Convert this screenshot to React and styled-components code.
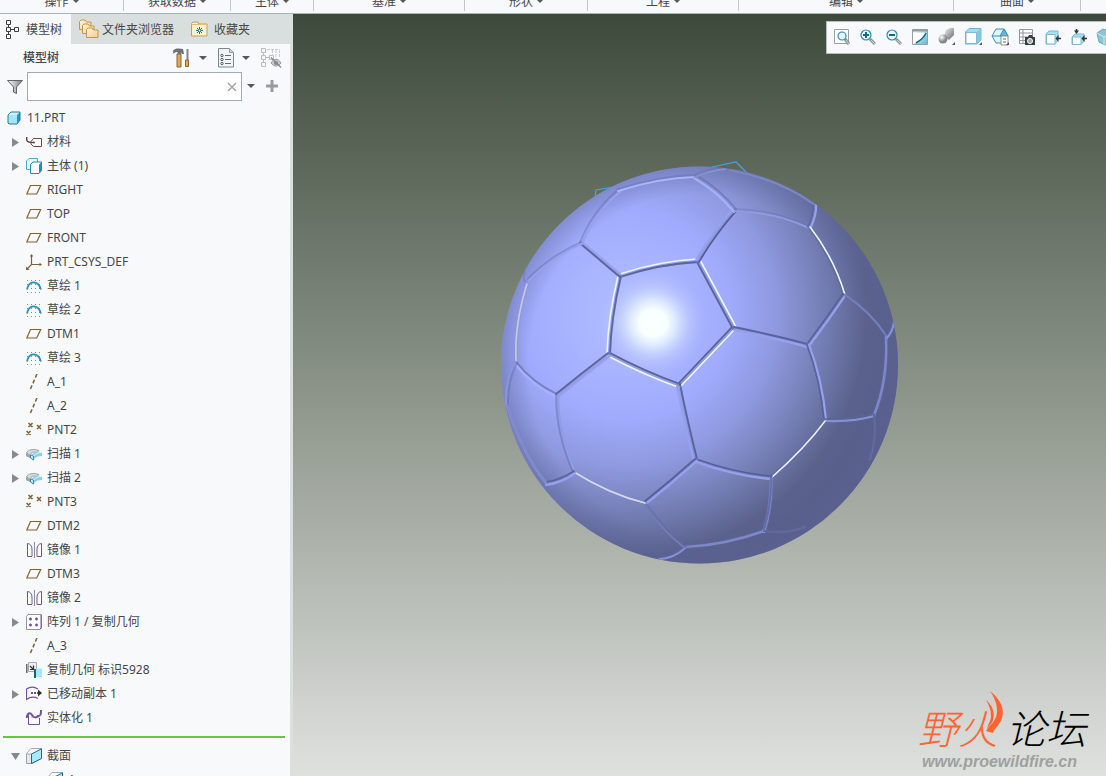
import React from "react";
import styled, { createGlobalStyle } from "styled-components";

const GlobalStyle = createGlobalStyle`
  * { box-sizing: border-box; }
  html, body { margin: 0; padding: 0; }
  body, button, input {
    font-family: "Noto Sans", "Noto Sans CJK SC", sans-serif;
    font-size: 12px;
    color: #44484b;
  }
  button { margin: 0; padding: 0; border: 0; background: none; cursor: pointer; }
  svg { display: block; flex: none; }
`;

const Page = styled.div`
  display: flex;
  flex-direction: column;
  height: 100vh;
  overflow: hidden;
  background: #f8f9fb;
`;

const Ribbon = styled.div`
  display: flex;
  flex: none;
  height: 14px;
  overflow: hidden;
  background: #f8f9fc;
  border-bottom: 1px solid #a9b4b4;
`;

const RibbonGroup = styled.button`
  display: flex;
  flex: none;
  align-items: flex-end;
  justify-content: center;
  gap: 4px;
  width: ${(p) => p.$width}px;
  height: 11px;
  border-right: 1px solid #c0c6c9;
  line-height: 18px;
  white-space: nowrap;
  overflow: hidden;
`;

const Caret = styled.span`
  width: 0;
  height: 0;
  border: ${(p) => p.$size}px solid transparent;
  border-top-color: #55595c;
  border-bottom-width: 0;
  margin-bottom: ${(p) => p.$lift || 0}px;
`;

const Main = styled.div`
  display: flex;
  flex: 1;
  min-height: 0;
`;

const Sidebar = styled.aside`
  display: flex;
  flex-direction: column;
  flex: none;
  width: 293px;
  border-right: 3px solid #dae0e0;
  background: #f7f9fb;
  overflow: hidden;
`;

const Tabs = styled.div`
  display: flex;
  flex: none;
  height: 30px;
  background: #d9dfde;
`;

const Tab = styled.button`
  display: flex;
  align-items: center;
  gap: ${(p) => p.$gap}px;
  padding: 0 9px 0 ${(p) => (p.$active ? 6 : 8)}px;
  background: ${(p) => (p.$active ? "#f7f9fb" : "transparent")};
  white-space: nowrap;
`;

const PanelHeader = styled.div`
  display: flex;
  flex: none;
  align-items: center;
  height: 28px;
  padding: 0 8px 0 23px;
`;

const PanelTitle = styled.h2`
  flex: 1;
  margin: 0;
  padding-bottom: 2px;
  font-size: 12px;
  font-weight: 500;
`;

const Tools = styled.div`
  display: flex;
  align-items: center;
  gap: 11px;
`;

const ToolPair = styled.div`
  display: flex;
  align-items: center;
  gap: 8px;
`;

const IconButton = styled.button`
  display: flex;
  align-items: center;
  justify-content: center;
`;

const FilterRow = styled.div`
  display: flex;
  flex: none;
  align-items: center;
  height: 29px;
  padding-left: 7px;
  gap: 4px;
`;

const SearchBox = styled.div`
  display: flex;
  flex: none;
  align-items: center;
  width: 215px;
  height: 29px;
  padding: 0 4px;
  border: 1px solid #9fadb0;
  background: #fff;
`;

const SearchInput = styled.input`
  flex: 1;
  min-width: 0;
  border: 0;
  outline: 0;
  background: transparent;
`;

const FilterActions = styled.div`
  display: flex;
  align-items: center;
  gap: 11px;
  padding: 0 0 2px 1px;
`;

const Tree = styled.ul`
  flex: none;
  margin: 0;
  padding: ${(p) => (p.$top ? 5 : 0)}px 0 0;
  list-style: none;
`;

const TreeRow = styled.li`
  display: flex;
  align-items: center;
  height: 24px;
  padding-left: ${(p) => p.$indent}px;
  white-space: nowrap;
`;

const RowLabel = styled.span`
  padding-bottom: 2px;
`;

const Expander = styled.button`
  display: flex;
  align-items: center;
  justify-content: center;
  width: 15px;
  height: 16px;
  margin-right: 3px;
`;

const NodeIcon = styled.span`
  display: flex;
  width: ${(p) => (p.$root ? 20 : 21)}px;
`;

const InsertLine = styled.div`
  flex: none;
  height: 2px;
  margin: 6px 5px 6px 3px;
  background: #62c83c;
`;

const Viewport = styled.main`
  position: relative;
  display: flex;
  flex: 1;
  align-items: center;
  justify-content: center;
  min-width: 0;
  padding-bottom: 60px;
  overflow: hidden;
  background: linear-gradient(#3d4a3b, #8d958a 50%, #dfe1df);
`;

const ViewToolbar = styled.div`
  position: absolute;
  top: 7px;
  right: 0;
  display: flex;
  width: 280px;
  height: 33px;
  padding: 0 0 2px 2px;
  overflow: hidden;
  background: #f8f9fc;
  border: 1px solid #b6bebd;
  border-right: 0;
`;

const ViewButton = styled.button`
  display: flex;
  flex: none;
  align-items: center;
  justify-content: center;
  width: ${(p) => (p.$menu ? 27 : 26)}px;
`;

const Watermark = styled.div`
  position: absolute;
  right: 20px;
  bottom: 4px;
  width: 168px;
`;

const LogoText = styled.div`
  display: flex;
  justify-content: space-between;
  font-family: "Liberation Sans", "Noto Sans CJK SC", sans-serif;
  font-weight: 300;
  font-style: italic;
  font-size: 40px;
  line-height: 44px;
  color: #000;
`;

const LogoFire = styled.span`
  color: #ff6430;
`;

const LogoUrl = styled.a`
  display: block;
  padding-left: 4px;
  font: italic bold 16px/20px "Liberation Sans", sans-serif;
  color: #9fa19f;
  text-decoration: none;
`;

const Flame = styled.svg`
  position: absolute;
  left: 63px;
  top: -17px;
`;

/* ---------- tree icons ---------- */

const I = ({ w = 16, h = 16, children }) => (
  <svg width={w} height={h} viewBox={`0 0 ${w} ${h}`} fill="none" aria-hidden="true">{children}</svg>
);

const brown = "#80622f";
const purple = "#7650a0";

const icons = {
  part: (
    <I w={14} h={14}>
      <path d="M1 4 4 1h9v8l-3 4H1z" fill="#c9f3fd" />
      <path d="M10 4l3-3v8l-3 4z" fill="#2795bd" />
      <path d="M1 4h9v9H1z" fill="#a3e6fb" />
      <path d="M1 4 4 1h9v8l-3 4H2l-1-1z" stroke="#287b9b" />
    </I>
  ),
  material: (
    <I>
      <path d="M5 7.500 7.500 4.500h8v8h-8L5 10z" stroke="#74483c" fill="#fff" />
      <path d="M.7 3v3C1 8.500 4 8.500 8 8.500" stroke="#604038" strokeWidth="1.400" />
      <circle cx="8" cy="8.500" r="1" fill="#74483c" />
    </I>
  ),
  body: (
    <I>
      <path d="M.5 3l2.500-2.500h8.500v9L9.500 11.500h-9z" fill="#e5f7fc" stroke="#55a9c5" />
      <path d="M4.500 6.500 7 4h8.500v8.500l-2.500 3H4.500z" fill="#fff" stroke="#2b8bad" />
      <path d="M13 6.500 15.500 4v8.500l-2.500 3z" fill="#2b8bad" />
    </I>
  ),
  plane: <I><path d="M4.500 3.500h10.200l-4 8.500H.8z" stroke={brown} strokeWidth="1.200" /></I>,
  csys: (
    <I>
      <path d="M5.500 1v9.500H15M5.500 10.500 1 15" stroke={brown} strokeWidth="1.200" />
      <path d="M5.500 0 7.200 2.500H3.800zM16 10.500 13.500 8.800v3.400zM0 16v-3.500L3.500 16z" fill={brown} />
    </I>
  ),
  sketch: (
    <I>
      {[1, 5, 9, 13].map((x) => [2, 6, 10, 14].map((y) => <path key={`${x}-${y}`} d={`M${x} ${y}.5h1`} stroke="#888" />))}
      <path d="M1 11.500C3 2 12 2 15 11.500" stroke="#2693bd" strokeWidth="1.800" />
    </I>
  ),
  axis: <I><path d="M11 0 4 16" stroke={brown} strokeWidth="1.500" strokeDasharray="4 2.200" /></I>,
  points: (
    <I><path d="M2.500 1l4 4m0-4-4 4M11 3l4 4m0-4-4 4M.5 9l4 4m0-4-4 4" stroke={brown} strokeWidth="1.500" /></I>
  ),
  sweep: (
    <I>
      <path d="M.5 7C2 3.500 7 2.500 13 4.500l-2 2c-4-1-6 0-7 2.500z" fill="#d5d9dc" stroke="#8d9498" strokeWidth=".8" />
      <path d="M0 7v3l4 2V9z" fill="#9da4a8" />
      <path d="M5 9c2-2 5-3 11-3v4c-4 0-6 1-8 3l-3-1z" fill="#8ad0e9" />
      <path d="M4.500 9l3.500.5c2-2 5-3 8-3" stroke="#e1f6fc" />
      <path d="M4.500 9v3l3 2v-4z" fill="#c9edf8" stroke="#3c8baa" />
    </I>
  ),
  mirror: (
    <I>
      <path d="M1.500 1.500v13H6V7C6 4 4 1.500 1.500 1.500zM15.500 1.500v13H11V7c0-3 2-5.500 4.500-5.500z" fill="#fff" stroke={purple} />
      <path d="M8.500 0v16" stroke="#888d91" />
    </I>
  ),
  pattern: (
    <I>
      <path d="M.5 2.500 2 .5h13.500v13.500L14 15.500H.5z" fill="#fff" stroke="#8f9398" />
      <path d="M15 1v13l-1 1" stroke={purple} />
      <path d="M3 5h3M4.500 3.500v3M9 5h3M10.500 3.500v3M3 11h3M4.500 9.500v3M9 11h3M10.500 9.500v3" stroke={purple} strokeWidth="1.400" />
    </I>
  ),
  copyGeom: (
    <I>
      <path d="M2.500.5H10.500v9H2.500z" fill="#eceeef" stroke="#aaa" />
      <path d="M.8 2v9" stroke="#666" strokeWidth="1.500" />
      <path d="M4 4l3 3M7.500 3.500v4H4" stroke="#333" strokeWidth="1.200" />
      <path d="M9 6.500h7V15H9z" fill="#a5e8fb" />
      <path d="M9 7v9" stroke="#16637f" strokeWidth="2" />
    </I>
  ),
  moved: (
    <I>
      <path d="M12 12.500C7 10 4 11 .5 13.500V3C5 0 9 1 12 3" stroke={purple} strokeWidth="1.200" />
      <path d="M5 7h8" stroke="#333" strokeWidth="1.500" strokeDasharray="2 1" />
      <path d="M12 3.500 16 7l-4 3.500z" fill="#333" />
    </I>
  ),
  solidify: (
    <I>
      <path d="M2.500 5v9.500h11V5" fill="#fff" stroke={purple} />
      <path d="M5 4l5 4 4-4v4H5z" fill="#d9cee7" />
      <path d="M.8 8C1 3 4 2 6 5s4 3 6 1c3 0 3-2 3-6" stroke={purple} strokeWidth="2" />
    </I>
  ),
  section: (
    <I>
      <path d="M.5 5.500 5 .5h10.500v10L6 15.500H.5z" fill="#fff" stroke="#a5a8aa" />
      <path d="M.5 6h5v9.500h-5z" fill="#e5e7e8" stroke="#a0a3a5" />
      <path d="M5.500 6 15.500.8v9.700l-10 5z" fill="#a8e8fb" stroke="#1b6f8e" />
    </I>
  ),
};

const nodes = [
  ["材料", "material", true], ["主体 (1)", "body", true], ["RIGHT", "plane"], ["TOP", "plane"],
  ["FRONT", "plane"], ["PRT_CSYS_DEF", "csys"], ["草绘 1", "sketch"], ["草绘 2", "sketch"],
  ["DTM1", "plane"], ["草绘 3", "sketch"], ["A_1", "axis"], ["A_2", "axis"], ["PNT2", "points"],
  ["扫描 1", "sweep", true], ["扫描 2", "sweep", true], ["PNT3", "points"], ["DTM2", "plane"],
  ["镜像 1", "mirror"], ["DTM3", "plane"], ["镜像 2", "mirror"], ["阵列 1 / 复制几何", "pattern", true],
  ["A_3", "axis"], ["复制几何 标识5928", "copyGeom"], ["已移动副本 1", "moved", true], ["实体化 1", "solidify"],
];

const Arrow = ({ open }) => (
  <svg width="9" height="9" viewBox="0 0 9 9" fill="#85898c" aria-hidden="true">
    <path d={open ? "M0 1h9L4.500 8z" : "M1 0l7 4.500L1 9z"} />
  </svg>
);

function Node({ label, icon, expandable, open }) {
  return (
    <TreeRow $indent={expandable ? 8 : 26}>
      {expandable && <Expander aria-label={`${open ? "折叠" : "展开"} ${label}`}><Arrow open={open} /></Expander>}
      <NodeIcon>{icons[icon]}</NodeIcon>
      <RowLabel>{label}</RowLabel>
    </TreeRow>
  );
}

/* ---------- tab and header icons ---------- */

const TreeGlyph = ({ color = "#3c4043" }) => (
  <g stroke={color} fill="none">
    <path d="M.5.500h4v4h-4zM.5 7.500h4v4h-4zM.5 14.500h4v4h-4zM8.500 7.500h4v4h-4zM2.500 4.500v3M2.500 11.500v3M4.500 9.500h4" />
  </g>
);

const FoldersIcon = () => (
  <I w={20} h={20}>
    <defs><linearGradient id="fold" x2="1" y2="1"><stop stopColor="#fff8de" /><stop offset="1" stopColor="#f1cc82" /></linearGradient></defs>
    {[[0, 0], [3, 4], [7, 8]].map(([x, y]) => (
      <path key={x} transform={`translate(${x} ${y})`} d="M.5 2.500 2 1h4l1.500 2h4.500v7.500H.5z" fill="url(#fold)" stroke="#c2974c" />
    ))}
  </I>
);

const FavouriteIcon = () => (
  <I w={17} h={16}>
    <path d="M.5 2.500 2 1h5l1 2h8v12H.5z" fill="#fff1ca" stroke="#c49c58" />
    <path d="M.5 3.500h15.500" stroke="#e3bc75" />
    <path d="M8.500 6v7M5 9.500h7M6 7l5 5M11 7l-5 5" stroke="#136a8b" />
    <circle cx="8.500" cy="9.500" r="1" fill="#fff" />
  </I>
);

const HammerIcon = () => (
  <I w={18} h={20}>
    <path d="M4 6h4v13H4z" fill="#dba95a" stroke="#8f6530" />
    <path d="M0 2.500C2 0 6 0 10 1l1 5H9L8 4.500v1.500H4.500V4C2.500 4 1.500 4.500.5 6z" fill="#6d7275" />
    <path d="M14.500 1v11" stroke="#81878b" strokeWidth="2" />
    <path d="M12.500 12h3v6.500h-3z" fill="#dba95a" stroke="#8f6530" />
  </I>
);

const ListIcon = () => (
  <I w={16} h={20}>
    <path d="M.5.500h11l4 4v14.500H.5z" fill="#f2f5f6" stroke="#7c878c" />
    <path d="M11.500.500v4h4" fill="#c9d0d3" stroke="#929b9f" />
    <path d="M7 7.500h6M7 11.500h6M7 15.500h6" stroke="#666d71" />
    <g stroke="#555c60"><circle cx="4" cy="7.500" r="1.200" /><circle cx="4" cy="11.500" r="1.200" /><circle cx="4" cy="15.500" r="1.200" /></g>
  </I>
);

const HiddenTreeIcon = () => (
  <I w={21} h={20}>
    <TreeGlyph color="#b8bdbf" />
    <path d="M6 1.500h12.500M11.500 2v6M15 2v8M18.500 2v8" stroke="#c9cdcf" strokeDasharray="3 1" />
    <path d="M10 15c3-5 7-5 10 0-3 4-7 4-10 0z" fill="#c6cacc" stroke="#96999b" />
    <circle cx="15" cy="15" r="2" fill="#85898b" />
    <path d="M10 9.500 20 19.500" stroke="#85898b" strokeWidth="1.300" />
  </I>
);

const FunnelIcon = () => (
  <I w={16} h={16}>
    <defs><linearGradient id="funnel"><stop stopColor="#fff" /><stop offset="1" stopColor="#777c7f" /></linearGradient></defs>
    <path d="M.5 1.500h15L9.500 8v6.500l-3-1.500V8z" fill="url(#funnel)" stroke="#606568" />
  </I>
);

/* ---------- view toolbar icons ---------- */

const Lens = ({ x = 6, y = 6, r = 5 }) => (
  <>
    <path d={`M${x + r - 1} ${y + r - 1}L15 15`} stroke="#8b9094" strokeWidth="3" />
    <path d={`M${x + r} ${y + r}L15 15`} stroke="#d6dadc" />
    <circle cx={x} cy={y} r={r} fill="#e3f6fc" stroke="#3688a9" strokeWidth="1.200" />
  </>
);

const MenuCorner = () => <path d="M18 15v3h-3z" fill="#505659" />;

const viewIcons = [
  ["重新调整", <I key="i"><path d="M.5.500h14v14H.5z" stroke="#9a9fa2" fill="#fff" /><Lens x={8} y={7} r={4} /></I>],
  ["放大", <I key="i"><Lens /><path d="M3 6h6M6 3v6" stroke="#126889" strokeWidth="2" /></I>],
  ["缩小", <I key="i"><Lens /><path d="M3 6h6" stroke="#126889" strokeWidth="2" /></I>],
  ["重画", (
    <I key="i">
      <defs><linearGradient id="paint" x2="1" y2="1"><stop offset=".2" stopColor="#e9f7fb" /><stop offset="1" stopColor="#58b6d4" /></linearGradient></defs>
      <path d="M.5.500h15v15H.5z" fill="url(#paint)" stroke="#9a9fa2" />
      <path d="M1 4h12C12 8 9 11 5 13.500L1 15z" fill="#fff" />
      <path d="M0 1.500h16" stroke="#92989b" strokeWidth="2" />
      <path d="M14 4C12 9 9 11 4 14" stroke="#126889" strokeWidth="1.500" />
    </I>
  )],
  ["渲染选项", (
    <I key="i" w={19} h={19}>
      <defs>
        <radialGradient id="steel" cx=".35" cy=".3"><stop stopColor="#fff" /><stop offset="1" stopColor="#85898c" /></radialGradient>
        <linearGradient id="tube" x2="1" y2="1"><stop stopColor="#f2f2f2" /><stop offset="1" stopColor="#666" /></linearGradient>
      </defs>
      <path d="M9 3l4-2h4v7l-5 5-5-4z" fill="url(#tube)" /><circle cx="6" cy="12" r="4.500" fill="url(#steel)" /><MenuCorner />
    </I>
  ), true],
  ["显示样式", (
    <I key="i" w={19} h={19}>
      <path d="M1.500 5 5 1.500h12V13l-4 4H1.500z" fill="#9bdcf2" stroke="#73b3cb" />
      <path d="M2 5.500h10.500v11H2z" fill="#fff" stroke="#80bbd0" /><path d="M13 5l4-3.500V13l-4 4z" fill="#7fc9e2" /><MenuCorner />
    </I>
  ), true],
  ["已保存方向", (
    <I key="i" w={19} h={19}>
      <path d="M5 2h8l4 7-4 7H5L1 9z" fill="#dff5fc" stroke="#3790b0" />
      <path d="M1 9h16" stroke="#3790b0" /><path d="M13 2l4 7H9z" fill="#66bcd8" stroke="#3790b0" />
      <path d="M10 9h7v9h-7z" fill="#fff" stroke="#8c9295" /><path d="M12 12h3M12 15h3" stroke="#666" /><MenuCorner />
    </I>
  ), true],
  ["视图管理器", (
    <I key="i">
      <path d="M.5.500h13v14H.5zM.5 4h13M.5 8h13M.5 11.500h13M4 .500v14" stroke="#92989b" fill="#fff" />
      <path d="M6 8h3l1-2h3l1 2h2v8H6z" fill="#3b4043" /><circle cx="11" cy="12" r="2.500" fill="#9ea5a9" stroke="#fff" />
    </I>
  )],
  ["透视图", (
    <I key="i">
      <path d="M1 5 4 2h9v9l-3 4H1z" fill="#a4dff3" stroke="#7dbad0" /><path d="M1.500 5.500h8.500V15H1.500z" fill="#fff" stroke="#7dbad0" />
      <path d="M16 9.500h-4" stroke="#333" strokeWidth="1.500" /><path d="M10.500 9.500 13.500 6v7z" fill="#333" />
    </I>
  )],
  ["基准显示", (
    <I key="i">
      <path d="M1 8l3-3h9v7l-3 3.500H1z" fill="#a4dff3" stroke="#7dbad0" /><path d="M1.500 8h8.500v7.500H1.500z" fill="#fff" stroke="#7dbad0" />
      <path d="M16 9.500h-4M5.500 0v3" stroke="#333" strokeWidth="1.500" /><path d="M10.500 9.500 13.500 6v7zM3 1.500h5l-2.500 3.500z" fill="#333" />
    </I>
  )],
  ["注释显示", (
    <I key="i" w={18} h={18}>
      <path d="M1 5l6-4 10 3v9l-8 4-6-3z" fill="#8fc3d6" stroke="#6ba7be" /><path d="M1 5l7 4 9-5M8 9v8" stroke="#d5edf5" />
    </I>
  )],
];

/* ---------- soccer ball ---------- */

// Each seam: path, highlight colour, highlight shift [x, y], shadow strength
const soft = "#96a2ee";
const bright = "#f0f6ff";
const seams = [
  ["M620 276Q659 263 698 261", bright, [0, -2], 0.9],
  ["M620 276Q610 318 609 354", bright, [-2, 0], 0.9],
  ["M609 354Q645 373 679 385", bright, [-1, 2], 0.95],
  ["M679 385L733 328", bright, [1, 2], 0.95],
  ["M698 261L734 328", bright, [2, -1], 0.9],
  ["M620 276L581 243", soft, [0, -2], 0.9],
  ["M698 261Q713 235 735 210", soft, [-2, -1], 1],
  ["M734 328Q778 337 807 345", soft, [0, 2], 0.9],
  ["M679 385Q686 420 696 460", soft, [-2, 1], 0.9],
  ["M609 354Q583 374 557 395", soft, [1, 2], 0.9],
  ["M581 243Q594 211 620 190", soft, [1, 1], 0.3],
  ["M618 190Q658 177 695 176", "#a9b5fb", [0, 1], 0.25],
  ["M581 243Q548 258 526 282", soft, [0, 1], 0.3],
  ["M527 284Q514 325 516 363", bright, [0, 0], 0.3],
  ["M526 282Q524 280 526 272", "#8792dc", [1, 0], 0.2],
  ["M557 395Q533 384 516 363", "#a6b2ff", [0, 2], 0.5],
  ["M516 363Q506 382 507 405", "#8a95de", [-1, 0], 0.3],
  ["M695 176Q719 190 735 210", "#a4b0f8", [-1, 2], 0.4],
  ["M695 176Q708 170 725 168", "#8490d2", [0, 1], 0.2],
  ["M735 210Q775 211 809 227", "#8f9ae0", [0, 1], 0.2],
  ["M809 227Q815 213 814 205", soft, [2, 0], 0.6],
  ["M730 170Q780 180 814 204", "#7f8bcb", [0, 0], 0.1],
  ["M809 227Q833 258 844 295", bright, [1, 0], 0.45],
  ["M844 295Q827 320 808 345", soft, [1, 1], 0.8],
  ["M844 295Q870 312 886 337", "#737ebb", [1, 0], 0.1],
  ["M886 337Q892 330 893 321", "#8792d8", [1, 1], 0.2],
  ["M886 337Q888 381 874 415", "#8e99e2", [0, 0], 0.3],
  ["M808 345Q821 379 825 420", soft, [1, 0], 0.8],
  ["M825 420Q853 421 874 415", "#8591d2", [0, 1], 0.6],
  ["M874 415Q877 438 870 460", "#646d9f", [0, 0], 0.1],
  ["M825 420Q805 447 771 477", bright, [0, 1], 0.3],
  ["M771 477Q735 474 696 460", soft, [0, 2], 0.9],
  ["M771 477Q772 505 764 531", "#8a95dc", [0, 1], 0.7],
  ["M764 531Q725 545 685 547", "#8f9ae2", [0, 0], 0.3],
  ["M764 531Q788 534 805 527", "#646d9e", [0, 0], 0.1],
  ["M685 547Q674 557 660 558", "#8893da", [0, 1], 0.4],
  ["M696 460Q670 483 645 503", soft, [1, 1], 0.9],
  ["M645 503Q664 531 685 547", "#727db6", [-1, 0], 0.3],
  ["M645 503Q609 494 574 472", bright, [0, 0], 0.2],
  ["M574 472Q557 434 557 395", "#919ce6", [1, 0], 0.35],
  ["M574 472Q561 481 546 483", soft, [0, 2], 0.8],
  ["M546 483Q522 453 507 405", "#929de6", [0, 0], 0.3],
];

function SoccerBall() {
  return (
    <svg width="421" height="420" viewBox="489 155 421 420" fill="none" role="img" aria-label="11.PRT">
      <defs>
        <radialGradient id="shade" gradientUnits="userSpaceOnUse" cx="625" cy="315" r="262">
          <stop offset="0" stopColor="#b0bdff" />
          <stop offset=".25" stopColor="#a7b3ff" />
          <stop offset=".4" stopColor="#a0abfd" />
          <stop offset=".58" stopColor="#8e99df" />
          <stop offset=".76" stopColor="#747eb4" />
          <stop offset=".92" stopColor="#5a628c" />
          <stop offset="1" stopColor="#595f8a" />
        </radialGradient>
        <radialGradient id="rim" gradientUnits="userSpaceOnUse" cx="700" cy="365" r="199">
          <stop offset=".86" stopColor="#5a6398" stopOpacity="0" />
          <stop offset="1" stopColor="#5a6398" stopOpacity=".4" />
        </radialGradient>
        <radialGradient id="shine" gradientUnits="userSpaceOnUse" cx="653" cy="323" r="54">
          <stop offset="0" stopColor="#fbffff" />
          <stop offset=".25" stopColor="#f8ffff" />
          <stop offset=".42" stopColor="#e6f2ff" stopOpacity=".85" />
          <stop offset=".68" stopColor="#c6d3ff" stopOpacity=".5" />
          <stop offset="1" stopColor="#b0bcff" stopOpacity="0" />
        </radialGradient>
        <clipPath id="ball"><circle cx="699.500" cy="365" r="198.500" /></clipPath>
      </defs>
      <path d="M595 198l1-8 24-4M712 167l24-5 12 12" stroke="#45a3e0" strokeWidth="1.200" />
      <circle cx="699.500" cy="365" r="198.500" fill="url(#shade)" />
      <circle cx="699.500" cy="365" r="198.500" fill="url(#rim)" />
      <circle cx="653" cy="323" r="54" fill="url(#shine)" />
      <g clipPath="url(#ball)" strokeLinecap="round">
        {seams.map(([d, light, [x, y], dark]) => (
          <g key={d}>
            <path d={d} stroke="#828dd2" strokeWidth="4" opacity={dark * 0.6} />
            <path d={d} stroke={light} strokeWidth={light === bright ? 1.6 : 2.2} transform={`translate(${x} ${y})`} />
            <path d={d} stroke="#4b5384" strokeWidth="1.800" opacity={dark * 0.85} transform={`translate(${x ? -Math.sign(x) : 0} ${y ? -Math.sign(y) : 0})`} />
          </g>
        ))}
      </g>
    </svg>
  );
}

const ribbonGroups = [
  ["操作", 124], ["获取数据", 107], ["主体", 83], ["基准", 151],
  ["形状", 123], ["工程", 151], ["编辑", 215], ["曲面", 127],
];

export default function App() {
  return (
    <Page>
      <GlobalStyle />
      <Ribbon>
        {ribbonGroups.map(([label, width]) => (
          <RibbonGroup key={label} $width={width}>{label}<Caret $size={3} $lift={8} /></RibbonGroup>
        ))}
      </Ribbon>
      <Main>
        <Sidebar>
          <Tabs>
            <Tab $active $gap={7}><I w={13} h={19}><TreeGlyph /></I>模型树</Tab>
            <Tab $gap={3}><FoldersIcon />文件夹浏览器</Tab>
            <Tab $gap={6}><FavouriteIcon />收藏夹</Tab>
          </Tabs>
          <PanelHeader>
            <PanelTitle>模型树</PanelTitle>
            <Tools>
              <ToolPair>
                <IconButton aria-label="设置"><HammerIcon /></IconButton>
                <IconButton aria-label="设置菜单"><Caret $size={4} /></IconButton>
              </ToolPair>
              <ToolPair>
                <IconButton aria-label="显示"><ListIcon /></IconButton>
                <IconButton aria-label="显示菜单"><Caret $size={4} /></IconButton>
              </ToolPair>
              <IconButton aria-label="隐藏的项"><HiddenTreeIcon /></IconButton>
            </Tools>
          </PanelHeader>
          <FilterRow>
            <FunnelIcon />
            <SearchBox>
              <SearchInput type="text" aria-label="过滤模型树" />
              <IconButton aria-label="清除">
                <I w={10} h={10}><path d="M1 1l8 8M9 1 1 9" stroke="#9a9fa2" strokeWidth="1.300" /></I>
              </IconButton>
            </SearchBox>
            <FilterActions>
              <IconButton aria-label="过滤选项"><Caret $size={4} /></IconButton>
              <IconButton aria-label="添加"><I w={12} h={12}><path d="M6 0v12M0 6h12" stroke="#999c9e" strokeWidth="3" /></I></IconButton>
            </FilterActions>
          </FilterRow>
          <Tree $top>
            <TreeRow $indent={7}><NodeIcon $root>{icons.part}</NodeIcon><RowLabel>11.PRT</RowLabel></TreeRow>
            {nodes.map(([label, icon, expandable]) => (
              <Node key={label} label={label} icon={icon} expandable={expandable} />
            ))}
          </Tree>
          <InsertLine />
          <Tree>
            <Node label="截面" icon="section" expandable open />
            <TreeRow $indent={47}><NodeIcon>{icons.section}</NodeIcon><RowLabel>A</RowLabel></TreeRow>
          </Tree>
        </Sidebar>
        <Viewport>
          <SoccerBall />
          <ViewToolbar>
            {viewIcons.map(([label, icon, menu]) => (
              <ViewButton key={label} $menu={menu} aria-label={label}>{icon}</ViewButton>
            ))}
          </ViewToolbar>
          <Watermark>
            <LogoText><LogoFire>野火</LogoFire><span>论坛</span></LogoText>
            <Flame width="24" height="46" viewBox="0 0 24 46" fill="#ff6430" aria-hidden="true">
              <path d="M9 0c10 8 15 17 12 27-2 7-7 9-9 15l-7-2c4-7 11-10 11-20C16 12 13 6 9 0z" />
              <path d="M5 9c7 6 9 13 7 20-1 4-4 5-6 9 1-5 4-8 4-13 0-6-2-11-5-16z" />
            </Flame>
            <LogoUrl href="#">www.proewildfire.cn</LogoUrl>
          </Watermark>
        </Viewport>
      </Main>
    </Page>
  );
}
